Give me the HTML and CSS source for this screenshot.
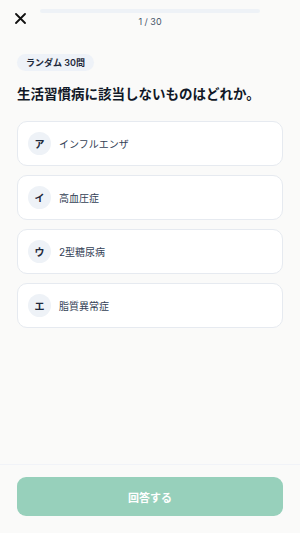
FILE: index.html
```html
<!DOCTYPE html>
<html lang="ja">
<head>
    <meta charset="UTF-8">
    <meta name="viewport" content="width=device-width, initial-scale=1.0">
    <title>クイズ</title>
    <link rel="stylesheet" href="styles.css">
</head>
<body>

    <div class="screen">
        <div class="header">
            <div class="close">
                <svg width="11" height="11" viewBox="0 0 11 11">
                    <path d="M1 1 L10 10 M10 1 L1 10" stroke="#111" stroke-width="1.8" stroke-linecap="round" fill="none"/>
                </svg>
            </div>
            <div class="progress">
                <div class="bar"><div class="fill" style="width: 0%"></div></div>
                <div class="count">1 / 30</div>
            </div>
            <div class="spacer"></div>
        </div>

        <div class="main">
            <span class="badge">ランダム 30問</span>
            <h1 class="question">生活習慣病に該当しないものはどれか。</h1>

            <div class="options">
                <div class="option">
                    <span class="mark">ア</span>
                    <span class="label">インフルエンザ</span>
                </div>
                <div class="option">
                    <span class="mark">イ</span>
                    <span class="label">高血圧症</span>
                </div>
                <div class="option">
                    <span class="mark">ウ</span>
                    <span class="label">2型糖尿病</span>
                </div>
                <div class="option">
                    <span class="mark">エ</span>
                    <span class="label">脂質異常症</span>
                </div>
            </div>
        </div>

        <div class="footer">
            <button class="answer" disabled>回答する</button>
        </div>
    </div>

</body>
</html>
```

FILE: styles.css
```css
body {
    margin: 0;
    padding: 0;
    background: #fafaf9;
    font-family: Inter, "Noto Sans CJK JP", sans-serif;
    color: #1e293b;
}
.screen {
    height: 533px;
    display: flex;
    flex-direction: column;
}
.header {
    display: flex;
    padding-top: 9px;
}
.close {
    width: 40px;
    display: flex;
    justify-content: center;
    padding-top: 4px;
}
.close svg {
    display: block;
}
.progress {
    flex: 1;
}
.bar {
    height: 4px;
    border-radius: 2px;
    background: #eef2f7;
}
.fill {
    height: 100%;
    border-radius: 2px;
    background: #97d0bb;
}
.count {
    text-align: center;
    font-size: 9px;
    line-height: 12px;
    margin-top: 3px;
    color: #475569;
}
.spacer {
    width: 40px;
}
.main {
    flex: 1;
    padding: 0 17px;
}
.badge {
    display: inline-block;
    margin-top: 26px;
    padding: 0 9px;
    height: 17px;
    line-height: 17px;
    border-radius: 9px;
    background: #eef2f8;
    font-size: 9px;
    font-weight: 600;
    color: #1e293b;
}
.question {
    margin: 13px 0 0;
    font-size: 13.5px;
    line-height: 20px;
    font-weight: 700;
    color: #111827;
}
.options {
    margin-top: 17px;
    display: flex;
    flex-direction: column;
    gap: 9px;
}
.option {
    height: 45px;
    box-sizing: border-box;
    display: flex;
    align-items: center;
    padding: 0 10px;
    background: white;
    border: 1px solid #e6eaf0;
    border-radius: 10px;
}
.mark {
    width: 23px;
    height: 23px;
    border-radius: 50%;
    background: #eef2f7;
    display: flex;
    align-items: center;
    justify-content: center;
    font-size: 10px;
    font-weight: 700;
    color: #1e293b;
}
.label {
    margin-left: 8px;
    font-size: 10px;
    color: #334155;
}
.footer {
    border-top: 1px solid #f1f3f8;
    padding: 12px 17px 17px;
}
.answer {
    width: 100%;
    height: 39px;
    border: none;
    border-radius: 9px;
    background: #97d0bb;
    color: white;
    font-family: inherit;
    font-size: 11px;
    font-weight: 700;
}
```
